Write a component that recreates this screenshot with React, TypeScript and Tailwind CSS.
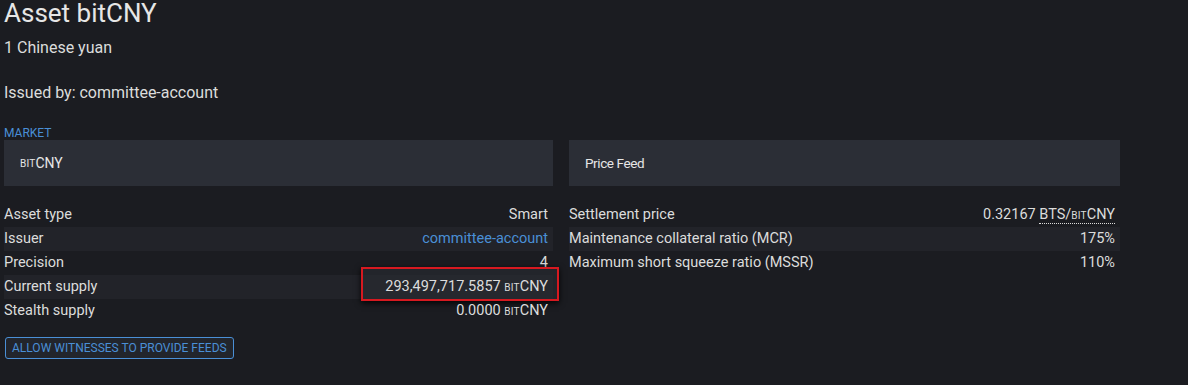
import React from 'react';

const Bit: React.FC = () => (
  <span className="text-[10px] tracking-[0.02em] uppercase">bit</span>
);

interface RowProps {
  label: string;
  value: React.ReactNode;
  striped?: boolean;
}

const Row: React.FC<RowProps> = ({ label, value, striped }) => (
  <div className={`flex h-6 items-center justify-between pr-[5px] ${striped ? 'bg-[#222329]' : ''}`}>
    <span>{label}</span>
    <span className="relative">{value}</span>
  </div>
);

export default function App() {
  return (
    <div className="min-h-screen bg-[#1b1c21] px-1 text-[#dcdcdc] font-['Roboto','Liberation_Sans',sans-serif]">
      <h1 className="text-[26px] leading-[26px] text-[#e6e6e6]">Asset bitCNY</h1>
      <p className="mt-[12px] text-[16px] leading-5">1 Chinese yuan</p>
      <p className="mt-[25px] text-[16px] leading-5">Issued by: committee-account</p>

      <div className="mt-[23px] text-[12px] leading-[14px] text-[#4a8fd6]">MARKET</div>

      <div className="flex gap-4">
        <div className="w-[549px]">
          <div className="flex h-[46px] items-center bg-[#2b2e36] px-[16px] text-[14px] text-[#e6e6e6]">
            <Bit />
            CNY
          </div>
          <div className="mt-[17px] text-[14.5px]">
            <Row label="Asset type" value="Smart" />
            <Row
              label="Issuer"
              striped
              value={<span className="text-[#4a8fd6]">committee-account</span>}
            />
            <Row label="Precision" value="4" />
            <Row
              label="Current supply"
              striped
              value={
                <>
                  <span className="pointer-events-none absolute -top-[9px] -right-[11px] -bottom-[3px] -left-[24px] border-2 border-[#d71920] bg-[#2a2c32]/60 shadow-[0_2px_6px_rgba(0,0,0,0.9)]" />
                  <span className="relative">
                    293,497,717.5857 <Bit />CNY
                  </span>
                </>
              }
            />
            <Row
              label="Stealth supply"
              value={
                <>
                  0.0000 <Bit />CNY
                </>
              }
            />
          </div>
          <button className="mt-[14px] ml-px h-[22px] rounded-[3px] border border-[#4a8fd6] bg-[#22252c] px-[6px] text-[12px] leading-none text-[#4a8fd6] uppercase">
            Allow witnesses to provide feeds
          </button>
        </div>

        <div className="w-[551px]">
          <div className="flex h-[46px] items-center bg-[#2b2e36] px-[16px] text-[13.5px] tracking-[-0.03em] text-[#e6e6e6]">
            Price Feed
          </div>
          <div className="mt-[17px] text-[14.5px]">
            <Row
              label="Settlement price"
              value={
                <>
                  0.32167{' '}
                  <span className="border-b border-dotted border-[#dcdcdc]">
                    BTS/<Bit />CNY
                  </span>
                </>
              }
            />
            <Row label="Maintenance collateral ratio (MCR)" striped value="175%" />
            <Row label="Maximum short squeeze ratio (MSSR)" value="110%" />
          </div>
        </div>
      </div>
    </div>
  );
}
